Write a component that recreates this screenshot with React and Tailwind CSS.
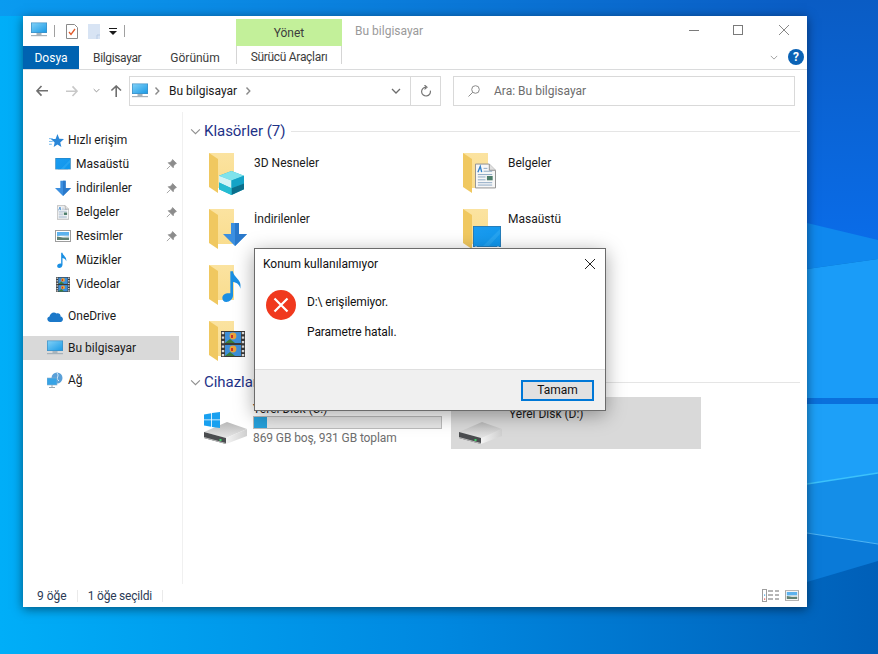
const font = { fontFamily: '"Roboto", "Noto Sans", sans-serif' };

const Monitor = ({ className }) => (
  <svg viewBox="0 0 16 16" className={className}>
    <defs>
      <linearGradient id="scr" x1="0" y1="0" x2="1" y2="1">
        <stop offset="0" stopColor="#7fd0f7" />
        <stop offset="1" stopColor="#1c9be6" />
      </linearGradient>
    </defs>
    <rect x="0" y="0.5" width="16" height="10.5" fill="#3f8fc4" />
    <rect x="0.7" y="1.2" width="14.6" height="9.1" fill="url(#scr)" />
    <rect x="5.5" y="11" width="5" height="2" fill="#a9b4bc" />
    <rect x="0" y="13" width="16" height="1.2" fill="#a5b1ba" />
  </svg>
);

const Arrow = ({ className, color = "#6f6f6f", rotate = "" }) => (
  <svg viewBox="0 0 12 12" className={`${className} ${rotate}`}>
    <path d="M5.5 1 L1 5.8 L5.5 10.6 M1 5.8 H12" fill="none" stroke={color} strokeWidth="1.6" />
  </svg>
);

const Chevron = ({ className, color = "#6d6d6d", sw = 1.3 }) => (
  <svg viewBox="0 0 10 6" className={className}>
    <path d="M1 1 L5 5 L9 1" fill="none" stroke={color} strokeWidth={sw} />
  </svg>
);

const ChevronRight = ({ className }) => (
  <svg viewBox="0 0 6 10" className={className}>
    <path d="M1.5 1.5 L4.8 5 L1.5 8.5" fill="none" stroke="#8a8a8a" strokeWidth="1.4" />
  </svg>
);

const Pin = () => (
  <svg viewBox="0 0 10 10" className="w-[11px] h-[11px]">
    <path d="M6 0.5 L9.5 4 L8.4 4.5 L6.8 6.3 L6.6 8 L2 3.4 L3.7 3.2 L5.5 1.6 Z M3.8 6.2 L0.8 9.2" fill="#8c8c8c" stroke="#8c8c8c" strokeWidth="0.7" />
  </svg>
);

const DesktopPic = ({ className }) => (
  <svg viewBox="0 0 28 22" className={className}>
    <defs>
      <linearGradient id="dsk" x1="0" y1="0" x2="1" y2="1">
        <stop offset="0" stopColor="#1c9cf0" />
        <stop offset="1" stopColor="#0f96ec" />
      </linearGradient>
    </defs>
    <rect x="0" y="0" width="28" height="21" fill="#2a77ad" />
    <rect x="0.8" y="0.8" width="26.4" height="19.4" fill="url(#dsk)" />
    <path d="M10 20 L27 3 V8 L16 20 Z" fill="#35aef4" opacity="0.5" />
    <path d="M2 21 H4 M24 21 H26" stroke="#fff" strokeWidth="0.8" />
  </svg>
);

const DownArrow = ({ className }) => (
  <svg viewBox="0 0 24 24" className={className}>
    <path d="M8 1 H16 V12 H24 L12 24 L0 12 H8 Z" fill="#3b8fe0" />
    <path d="M12 1 H16 V12 H24 L12 24 Z" fill="#2a79cb" />
  </svg>
);

const DocPic = ({ className }) => (
  <svg viewBox="0 0 22 26" className={className}>
    <path d="M0.5 0.5 H15 L21.5 7 V25.5 H0.5 Z" fill="#f7f7f7" stroke="#8f8f8f" />
    <path d="M15 0.5 V7 H21.5" fill="#dfdfdf" stroke="#8f8f8f" />
    <path d="M3 9 L5.5 3 L7 9" fill="none" stroke="#2f7fc9" strokeWidth="1.4" />
    <path d="M9 5 H13 M9 8 H18 M3 11.5 H18 M3 14 H11 M3 17 H11 M3 20 H18 M3 22.5 H18" stroke="#7d9dbb" strokeWidth="0.9" />
    <rect x="12.5" y="13" width="6" height="4.5" fill="#4c7d6a" />
  </svg>
);

const PicturePic = ({ className }) => (
  <svg viewBox="0 0 16 12" className={className}>
    <rect x="0.5" y="0.5" width="15" height="11" fill="#fff" stroke="#9d9d9d" />
    <rect x="2" y="2" width="12" height="4" fill="#5cb2ee" />
    <path d="M2 5.5 H14 V7 L8 6.2 Z" fill="#c4dae8" />
    <path d="M2 6.5 L8 7.5 L14 7.5 V10 H2 Z" fill="#5f8072" />
  </svg>
);

const Note = ({ className }) => (
  <svg viewBox="0 0 16 24" className={className}>
    <path d="M6 1 H8 C8.5 6 15 7 13.5 14 C13 11 11 9.5 8 9 V19 C8 22 5.5 24 3 24 C1 24 0 22.5 0 21 C0 18.5 2.5 17 6 17.5 Z" fill="#1a8fe3" />
  </svg>
);

const Film = ({ className }) => (
  <svg viewBox="0 0 24 26" className={className}>
    <rect x="0" y="0" width="24" height="26" fill="#3a3a3a" />
    <rect x="0.8" y="1" width="2.4" height="2.2" fill="#ddd" />
    <rect x="0.8" y="5.5" width="2.4" height="2.2" fill="#ddd" />
    <rect x="0.8" y="10" width="2.4" height="2.2" fill="#ddd" />
    <rect x="0.8" y="14.5" width="2.4" height="2.2" fill="#ddd" />
    <rect x="0.8" y="19" width="2.4" height="2.2" fill="#ddd" />
    <rect x="0.8" y="23" width="2.4" height="2.2" fill="#ddd" />
    <rect x="20.8" y="1" width="2.4" height="2.2" fill="#ddd" />
    <rect x="20.8" y="5.5" width="2.4" height="2.2" fill="#ddd" />
    <rect x="20.8" y="10" width="2.4" height="2.2" fill="#ddd" />
    <rect x="20.8" y="14.5" width="2.4" height="2.2" fill="#ddd" />
    <rect x="20.8" y="19" width="2.4" height="2.2" fill="#ddd" />
    <rect x="20.8" y="23" width="2.4" height="2.2" fill="#ddd" />
    <rect x="4" y="1" width="16" height="11" fill="#3d8fd9" />
    <rect x="4" y="14" width="16" height="11" fill="#3d8fd9" />
    <circle cx="12" cy="5" r="3.4" fill="#e8a33a" />
    <circle cx="12" cy="18" r="3.4" fill="#e8a33a" />
    <path d="M4 12 L9 8 L14 12 Z M4 25 L9 21 L14 25 Z" fill="#3c7d3a" />
    <path d="M10 4 H12 V7 H10 Z M10 17 H12 V20 H10 Z" fill="#c9302c" />
  </svg>
);

const Cube = ({ className }) => (
  <svg viewBox="0 0 26 25" className={className}>
    <path d="M13 0 L26 5 V19 L13 25 L0 19 V5 Z" fill="#22b2cf" />
    <path d="M0 5 L13 0 L26 5 L13 10 Z" fill="#7fe3ec" />
    <path d="M0 5 L13 10 V18 L0 12 Z" fill="#d2f4f6" />
    <path d="M13 10 L26 5 V13 L13 18 Z" fill="#14a3c7" />
    <path d="M13 18 L26 13 V19 L13 25 Z" fill="#0b6f8c" />
    <path d="M0 12 L13 18 V25 L0 19 Z" fill="#25bcd2" />
  </svg>
);

const Folder = ({ children }) => (
  <div className="relative w-[46px] h-[46px] shrink-0">
    <svg viewBox="0 0 46 46" className="w-[46px] h-[46px]">
      <defs>
        <linearGradient id="fold" x1="0" y1="0" x2="0" y2="1">
          <stop offset="0" stopColor="#fbe3a0" />
          <stop offset="1" stopColor="#f9dc8c" />
        </linearGradient>
      </defs>
      <path d="M1 3 H26 V38 H10 V43 Z" fill="url(#fold)" />
      <path d="M1 3 L10 9 V43 L1 37 Z" fill="#f0c860" />
    </svg>
    {children}
  </div>
);

const Drive = ({ windows }) => (
  <div className="relative w-[46px] h-[42px] shrink-0">
    <svg viewBox="0 0 46 42" className="w-[46px] h-[42px]">
      <defs>
        <linearGradient id="drvTop" x1="0" y1="0" x2="0" y2="1">
          <stop offset="0" stopColor="#b8b8b8" />
          <stop offset="1" stopColor="#e6e6e6" />
        </linearGradient>
        <linearGradient id="drvSide" x1="0" y1="0" x2="1" y2="0">
          <stop offset="0" stopColor="#f4f4f4" />
          <stop offset="1" stopColor="#cfcfcf" />
        </linearGradient>
      </defs>
      <path d="M1 29 L24 19 L44 26 L23 35 Z" fill="url(#drvTop)" />
      <path d="M1 29 L23 35 V41 L1 35 Z" fill="#4a4c4f" />
      <path d="M23 35 L44 26 V33 L23 41 Z" fill="url(#drvSide)" />
      <path d="M1 34 L23 40 V41 L1 35 Z" fill="#bdbdbd" />
      <rect x="16.5" y="36" width="2" height="2" fill="#3fd46a" />
    </svg>
    {windows && (
      <svg viewBox="0 0 20 20" className="absolute left-[1px] top-[9px] w-[16px] h-[16px]">
        <path d="M0 3 L9 1.6 V9.4 H0 Z M10 1.4 L20 0 V9.4 H10 Z M0 10.4 H9 V18.4 L0 17 Z M10 10.4 H20 V20 L10 18.6 Z" fill="#18a0f0" />
      </svg>
    )}
  </div>
);

const NavRow = ({ icon, label, pinned, active, indent }) => (
  <div className={`flex items-center h-6 ${active ? "bg-[#d9d9d9]" : ""} ${indent ? "pl-[32px]" : "pl-[24px]"} w-[156px]`}>
    <span className="w-[21px] flex items-center shrink-0">{icon}</span>
    <span className="text-[12px] text-[#1a1a1a] flex-1">{label}</span>
    {pinned && (
      <span className="mr-[2px] flex">
        <Pin />
      </span>
    )}
  </div>
);

const SectionHeader = ({ title }) => (
  <div className="flex items-center h-5 pl-[5px] pr-[7px]">
    <Chevron className="w-[11px] h-[7px] mr-[3px]" color="#8f8f8f" sw={1} />
    <span className="text-[15px] text-[#1e3287] mr-[6px] tracking-[-0.03px]">{title}</span>
    <div className="flex-1 h-px bg-[#e5e5e5]" />
  </div>
);

const FolderItem = ({ label, children }) => (
  <div className="flex h-[46px]">
    <Folder>{children}</Folder>
    {label && <span className="text-[12px] text-[#1a1a1a] mt-[4px]">{label}</span>}
  </div>
);

export default function App() {
  return (
    <div style={font} className="relative w-[878px] h-[654px] overflow-hidden bg-gradient-to-r from-[#00aef8] via-[#0088e0] to-[#005fb8]">
      {/* wallpaper */}
      <svg viewBox="0 0 878 654" className="absolute inset-0 w-full h-full">
        <defs>
          <linearGradient id="wp" x1="0" y1="0" x2="807" y2="0" gradientUnits="userSpaceOnUse">
            <stop offset="0" stopColor="#0a9bf0" />
            <stop offset="1" stopColor="#0a5cc4" />
          </linearGradient>
          <linearGradient id="wpRight" x1="0" y1="0" x2="0" y2="1">
            <stop offset="0" stopColor="#0a5cc4" />
            <stop offset="1" stopColor="#0a6ce8" />
          </linearGradient>
        </defs>
        <rect x="0" y="0" width="807" height="16" fill="url(#wp)" />
        <rect x="807" y="0" width="71" height="240" fill="url(#wpRight)" />
        <path d="M807 223 L878 240 V259 L807 269 Z" fill="#0f88ee" />
        <path d="M807 269 L878 259 V400 H807 Z" fill="#1a9cf8" />
        <rect x="807" y="398" width="71" height="6" fill="#0a70dc" />
        <path d="M807 404 H878 V473 L807 484 Z" fill="#1da0f8" />
        <path d="M807 484 L878 473 V544 L807 533 Z" fill="#148ee8" />
        <path d="M807 533 L878 544 V561 L807 582 Z" fill="#0a7ad8" />
        <path d="M807 484 L878 473" stroke="#3cc2fb" strokeWidth="1.5" />
        <path d="M807 533 L878 544" stroke="#4fb5f5" strokeWidth="1.2" />
      </svg>

      {/* explorer window */}
      <div className="absolute left-[23px] top-[16px] w-[784px] h-[591px] bg-white flex flex-col shadow-[0_2px_10px_rgba(0,0,0,0.5)] text-[12px]">
        {/* title row */}
        <div className="flex items-center h-[30px] shrink-0 relative">
          <Monitor className="w-4 h-4 ml-[8px] mt-[-2px]" />
          <div className="w-px h-[12px] bg-[#a0a0a0] ml-[7px]" />
          <svg viewBox="0 0 12 15" className="w-[12px] h-[15px] ml-[11px]">
            <path d="M0.5 0.5 H8.5 L11.5 3.5 V14.5 H0.5 Z" fill="#fff" stroke="#8a8a8a" />
            <path d="M3 8 L5 10.5 L9 5" fill="none" stroke="#e0592a" strokeWidth="1.3" />
          </svg>
          <svg viewBox="0 0 12 15" className="w-[12px] h-[15px] ml-[10px]">
            <rect x="0" y="0" width="12" height="15" fill="#d8e4f4" />
            <path d="M9 15 V11 H12" fill="none" stroke="#b9cce6" />
          </svg>
          <svg viewBox="0 0 8 7" className="w-[8px] h-[7px] ml-[9px]">
            <path d="M0 0 H8 V1 H0 Z M0 3 H8 L4 7 Z" fill="#1a1a1a" />
          </svg>
          <div className="w-px h-[12px] bg-[#a0a0a0] ml-[7px]" />
          <div className="absolute left-[213px] top-[3px] w-[106px] h-[27px] bg-[#c3f09a] flex items-center justify-center text-[#3d3d3d]">
            Yönet
          </div>
          <span className="absolute left-[332px] top-[6px] text-[#9a9a9a]">Bu bilgisayar</span>
          <div className="absolute right-[18px] top-[9px] flex items-center gap-[35px]">
            <div className="w-[10px] h-px bg-[#7a7a7a]" />
            <div className="w-[10px] h-[10px] border border-[#7a7a7a] ml-[-1px]" />
            <svg viewBox="0 0 10 10" className="w-[10px] h-[10px] ml-[1px]">
              <path d="M0 0 L10 10 M10 0 L0 10" stroke="#7a7a7a" strokeWidth="0.9" />
            </svg>
          </div>
        </div>

        {/* ribbon tabs */}
        <div className="flex h-[24px] shrink-0 border-b border-[#dadbdc] relative text-[#3c3c3c]">
          <div className="w-[56px] h-[23px] bg-[#0063b1] text-white flex items-center justify-center">Dosya</div>
          <div className="ml-[14px] flex items-center tracking-[-0.35px]">Bilgisayar</div>
          <div className="ml-[29px] flex items-center">Görünüm</div>
          <div className="absolute left-[213px] top-0 w-[106px] h-[18px] border-x border-[#d5d5d5] flex items-center justify-center tracking-[-0.3px] pt-[4px]">
            Sürücü Araçları
          </div>
          <Chevron className="absolute left-[747px] top-[9px] w-[8px] h-[5px]" color="#8d8d8d" sw={1} />
          <div className="absolute left-[765px] top-[3px] w-4 h-4 rounded-full bg-[#0a62b5] text-white font-bold text-[12px] flex items-center justify-center">?</div>
        </div>

        {/* address row */}
        <div className="flex items-center h-[42px] shrink-0 pb-[6px] pt-[5px]">
          <Arrow className="w-[12px] h-[12px] ml-[13px]" />
          <Arrow className="w-[12px] h-[12px] ml-[18px]" color="#c8c8c8" rotate="rotate-180" />
          <Chevron className="w-[7px] h-[5px] ml-[15px]" color="#8a8a8a" />
          <Arrow className="w-[12px] h-[12px] ml-[10px]" rotate="rotate-90" />
          <div className="flex items-center w-[312px] h-[30px] ml-[7px] border border-[#d9d9d9]">
            <Monitor className="w-4 h-4 ml-[2px]" />
            <ChevronRight className="w-[6px] h-[10px] ml-[6px]" />
            <span className="ml-[9px] text-[#1a1a1a]">Bu bilgisayar</span>
            <ChevronRight className="w-[6px] h-[10px] ml-[8px]" />
            <div className="flex-1" />
            <Chevron className="w-[10px] h-[6px] mr-[9px]" color="#6d6d6d" />
            <div className="w-[30px] h-full border-l border-[#d9d9d9] flex items-center justify-center">
              <svg viewBox="0 0 12 12" className="w-[12px] h-[12px]">
                <path d="M6 2.2 A4.4 4.4 0 1 0 10.3 5.6 M4.5 0 L7 2.2 L4.5 4.4" fill="none" stroke="#777" strokeWidth="1.2" />
              </svg>
            </div>
          </div>
          <div className="flex items-center w-[342px] h-[30px] ml-[12px] border border-[#d9d9d9]">
            <svg viewBox="0 0 12 12" className="w-[12px] h-[12px] ml-[14px]">
              <circle cx="7.5" cy="4.5" r="3.8" fill="none" stroke="#8a8a8a" />
              <path d="M4.8 7.2 L0.5 11.5" stroke="#8a8a8a" />
            </svg>
            <span className="ml-[14px] text-[#6d6d6d]">Ara: Bu bilgisayar</span>
          </div>
        </div>

        {/* body */}
        <div className="flex flex-1 min-h-0">
          <div className="w-[160px] shrink-0 border-r border-[#f0f0f0] pt-[16px]">
            <NavRow label="Hızlı erişim" icon={<svg viewBox="0 0 16 16" className="w-[15px] h-[15px] ml-[2px]"><path d="M9 1 L11 6 L16 6.5 L12 10 L13.2 15 L9 12.3 L5 15 L6 10 L2 6.5 H7 Z" fill="#2a87d8" /><path d="M0 6 H4 M0 9 H4 M0 12 H3" stroke="#6db5ec" /></svg>} />
            <NavRow indent pinned label="Masaüstü" icon={<DesktopPic className="w-4 h-[12px]" />} />
            <NavRow indent pinned label="İndirilenler" icon={<DownArrow className="w-4 h-4" />} />
            <NavRow indent pinned label="Belgeler" icon={<DocPic className="w-[12px] h-[15px] ml-[2px]" />} />
            <NavRow indent pinned label="Resimler" icon={<PicturePic className="w-4 h-[12px]" />} />
            <NavRow indent label="Müzikler" icon={<Note className="w-[11px] h-4 ml-[2px]" />} />
            <NavRow indent label="Videolar" icon={<Film className="w-[14px] h-[15px] ml-[1px]" />} />
            <div className="h-2" />
            <NavRow label="OneDrive" icon={<svg viewBox="0 0 16 11" className="w-4 h-[11px]"><path d="M3.5 11 C0 11 -1 6.5 2.5 5.5 C3 2 7 0 9.5 2.5 C12 1.5 14 3.5 13.5 5.5 C17 6 16.5 11 13.5 11 Z" fill="#1b78c9" /></svg>} />
            <div className="h-2" />
            <NavRow active label="Bu bilgisayar" icon={<Monitor className="w-4 h-4" />} />
            <div className="h-2" />
            <NavRow label="Ağ" icon={<svg viewBox="0 0 16 16" className="w-4 h-4"><circle cx="10" cy="6" r="5.5" fill="#5aa0d8" /><path d="M10 1 C13 4 8 6 12 9" stroke="#d8ecfa" fill="none" /><rect x="0" y="6" width="10" height="7" fill="#36a3e6" stroke="#8ab0cc" strokeWidth="0.6" /><path d="M5 13 V15 M2 15.5 H8" stroke="#9aa8b2" /></svg>} />
          </div>

          <div className="flex-1 pt-[9px] pl-[2px]">
            <SectionHeader title="Klasörler (7)" />
            {/* labels of the items behind the dialog are not visible, so they are left out */}
            <div className="grid grid-cols-[254px_254px] gap-y-[10px] pl-[23px] mt-[9px]">
              <FolderItem label="3D Nesneler"><Cube className="absolute left-[11px] top-[21px] w-[25px] h-[24px]" /></FolderItem>
              <FolderItem label="Belgeler"><DocPic className="absolute left-[13px] top-[12px] w-[21px] h-[28px]" /></FolderItem>
              <FolderItem label="İndirilenler"><DownArrow className="absolute left-[15px] top-[16px] w-[24px] h-[24px]" /></FolderItem>
              <FolderItem label="Masaüstü"><DesktopPic className="absolute left-[11px] top-[20px] w-[28px] h-[22px]" /></FolderItem>
              <FolderItem><Note className="absolute left-[14px] top-[8px] w-[22px] h-[32px]" /></FolderItem>
              <FolderItem><PicturePic className="absolute left-[11px] top-[17px] w-[28px] h-[22px]" /></FolderItem>
              <FolderItem><Film className="absolute left-[13px] top-[12px] w-[24px] h-[28px]" /></FolderItem>
            </div>
            <div className="mt-[8px]">
              <SectionHeader title="Cihazlar ve sürücüler (2)" />
            </div>
            <div className="flex mt-[5px] pl-[10px]">
              <div className="flex w-[256px] h-[52px] pl-[8px]">
                <div className="pt-[6px]">
                  <Drive windows />
                </div>
                <div className="ml-[4px] w-[189px] flex flex-col pt-[5px]">
                  <span className="leading-[14px] text-[#1a1a1a]">Yerel Disk (C:)</span>
                  <div className="h-[13px] bg-[#e6e6e6] border border-[#bcbcbc] shrink-0">
                    <div className="h-full w-[7%] bg-[#26a0da]" />
                  </div>
                  <span className="text-[#6d6d6d] tracking-[-0.1px]">869 GB boş, 931 GB toplam</span>
                </div>
              </div>
              <div className="flex w-[250px] h-[52px] bg-[#d9d9d9] pl-[7px] pt-[6px]">
                <Drive />
                <span className="ml-[5px] mt-[2px] text-[#1a1a1a]">Yerel Disk (D:)</span>
              </div>
            </div>
          </div>
        </div>

        {/* status bar */}
        <div className="flex items-center h-[23px] shrink-0 text-[#2b3a55] relative">
          <span className="ml-[14px]">9 öğe</span>
          <div className="w-px h-[12px] bg-[#eaeaea] ml-[10px]" />
          <span className="ml-[10px] tracking-[-0.2px]">1 öğe seçildi</span>
          <div className="w-px h-[12px] bg-[#eaeaea] ml-[10px]" />
          <svg viewBox="0 0 17 13" className="absolute left-[739px] top-[5px] w-[17px] h-[13px]">
            <rect x="0.5" y="0.5" width="4" height="12" fill="#fff" stroke="#9e9e9e" />
            <path d="M6 2 H11 M13 2 H17 M6 6 H11 M13 6 H17 M6 10 H11 M13 10 H17" stroke="#6d6d6d" />
            <rect x="2" y="9.5" width="1.2" height="1.2" fill="#e04040" />
            <rect x="2" y="5.5" width="1.2" height="1.2" fill="#3aa0e0" />
          </svg>
          <PicturePic className="absolute left-[762px] top-[6px] w-[14px] h-[11px]" />
        </div>
      </div>

      {/* error dialog */}
      <div className="absolute left-[254px] top-[248px] w-[352px] h-[163px] bg-white border border-[#6b6b6b] flex flex-col shadow-[0_4px_18px_rgba(0,0,0,0.35)] text-[12px] text-[#111]">
        <div className="flex items-center justify-between h-[30px] pl-[8px] pr-[10px] shrink-0">
          <span>Konum kullanılamıyor</span>
          <svg viewBox="0 0 10 10" className="w-[10px] h-[10px]">
            <path d="M0 0 L10 10 M10 0 L0 10" stroke="#222" strokeWidth="1" />
          </svg>
        </div>
        <div className="flex flex-1 pl-[11px] pt-[11px]">
          <svg viewBox="0 0 30 30" className="w-[30px] h-[30px] shrink-0">
            <circle cx="15" cy="15" r="15" fill="#f0391e" />
            <path d="M8.5 8.5 L21.5 21.5 M21.5 8.5 L8.5 21.5" stroke="#fff" strokeWidth="2.2" />
          </svg>
          <div className="ml-[11px] pt-[4px] leading-4 tracking-[-0.1px]">
            <div>D:\ erişilemiyor.</div>
            <div className="mt-[14px]">Parametre hatalı.</div>
          </div>
        </div>
        <div className="h-[41px] shrink-0 bg-[#f0f0f0] border-t border-[#dfdfdf] flex items-center justify-end pr-[11px]">
          <div className="w-[73px] h-[21px] bg-[#e1e1e1] border-2 border-[#0078d7] flex items-center justify-center">Tamam</div>
        </div>
      </div>
    </div>
  );
}
